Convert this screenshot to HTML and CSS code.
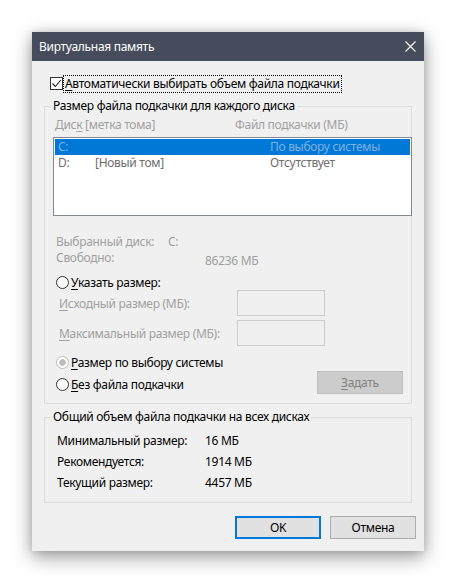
FILE: index.html
```html
<!DOCTYPE html>
<html lang="ru">
<head>
<meta charset="utf-8">
<title>Виртуальная память</title>
<link rel="stylesheet" href="styles.css">
</head>
<body>
<div class="dialog">
  <div class="titlebar">
    <span class="title">Виртуальная память</span>
    <svg class="close" width="11" height="11" viewBox="0 0 11 11"><path d="M0.5 0.5L10.5 10.5M10.5 0.5L0.5 10.5" stroke="#fff" stroke-width="1.1" fill="none"/></svg>
  </div>
  <div class="content">
    <div class="auto-row">
      <span class="checkbox"><svg width="11" height="11" viewBox="0 0 11 11"><path d="M1.5 5.5L4.3 8.5L9.8 2" stroke="#222" stroke-width="1.1" fill="none"/></svg></span>
      <span class="focus"><u>А</u>втоматически выбирать объем файла подкачки</span>
    </div>

    <div class="group g1">
      <span class="legend">Размер файла подкачки для каждого диска</span>
      <div class="hdr disabled">
        <span>Дис<u>к</u> [метка тома]</span>
        <span>Файл подкачки (МБ)</span>
      </div>
      <div class="list">
        <div class="lrow sel"><span>C:</span><span></span><span>По выбору системы</span></div>
        <div class="lrow"><span>D:</span><span>[Новый том]</span><span>Отсутствует</span></div>
      </div>
      <div class="info disabled">
        <div class="irow"><span class="ilabel">Выбранный диск:</span><span>C:</span></div>
        <div class="irow"><span class="ilabel">Свободно:</span><span class="free">86236 МБ</span></div>
      </div>
      <div class="radio-row r1"><span class="radio"></span><span><u>У</u>казать размер:</span></div>
      <div class="field-row f1"><span class="flabel disabled"><u>И</u>сходный размер (МБ):</span><span class="input"></span></div>
      <div class="field-row f2"><span class="flabel disabled"><u>М</u>аксимальный размер (МБ):</span><span class="input"></span></div>
      <div class="radio-row r2"><span class="radio checked"></span><span><u>Р</u>азмер по выбору системы</span></div>
      <div class="last-row">
        <div class="radio-row r3"><span class="radio"></span><span><u>Б</u>ез файла подкачки</span></div>
        <span class="btn btn-dis"><u>З</u>адать</span>
      </div>
    </div>

    <div class="group g2">
      <span class="legend">Общий объем файла подкачки на всех дисках</span>
      <div class="trow"><span>Минимальный размер:</span><span>16 МБ</span></div>
      <div class="trow"><span>Рекомендуется:</span><span>1914 МБ</span></div>
      <div class="trow"><span>Текущий размер:</span><span>4457 МБ</span></div>
    </div>

    <div class="buttons">
      <span class="btn btn-def">OK</span>
      <span class="btn">Отмена</span>
    </div>
  </div>
</div>
</body>
</html>
```

FILE: styles.css
```css
* { box-sizing: border-box; }
html, body { margin: 0; padding: 0; }
body {
  width: 456px;
  height: 583px;
  background: #ffffff;
  font-family: "Noto Sans", "Open Sans", sans-serif;
  font-size: 12px;
  letter-spacing: -0.3px;
  color: #000;
  overflow: hidden;
}
u { text-decoration: underline; text-underline-offset: 2px; }
.dialog {
  margin: 32px 0 0 32px;
  width: 392px;
  height: 519px;
  background: #f0f0f0;
  box-shadow: 0 6px 18px rgba(0,0,0,0.40), 0 0 8px rgba(0,0,0,0.12);
  display: flex;
  flex-direction: column;
}
.titlebar {
  height: 29px;
  background: #464c5c;
  display: flex;
  align-items: center;
  justify-content: space-between;
  padding: 0 7px 0 7px;
  color: #fff;
}
.title { line-height: 16px; padding-top: 1px; }
.close { margin-right: 1px; }
.content {
  padding: 0 12px;
  display: flex;
  flex-direction: column;
}
.auto-row {
  margin-top: 14px;
  height: 17px;
  display: flex;
  align-items: center;
  padding-left: 6px;
}
.checkbox {
  width: 13px;
  height: 13px;
  border: 1px solid #333;
  background: #fff;
  display: flex;
  align-items: center;
  justify-content: center;
  margin-right: 1px;
}
.focus {
  outline: 1px dotted #000;
  outline-offset: 0;
  padding: 0 1px;
  line-height: 16px;
}
.group {
  position: relative;
  border: 1px solid #dcdcdc;
  display: flex;
  flex-direction: column;
}
.legend {
  position: absolute;
  top: -9px;
  left: 6px;
  padding: 0 2px;
  background: #f0f0f0;
  line-height: 16px;
}
.disabled { color: #a0a0a0; }
.g1 { margin-top: 14px; height: 298px; padding-top: 10px; }
.hdr {
  height: 16px;
  line-height: 16px;
  padding-left: 10px;
  display: grid;
  grid-template-columns: 180px auto;
}
.list {
  margin: 4px 0 0 8px;
  width: 359px;
  height: 79px;
  border: 1px solid #828790;
  background: #fff;
  padding: 1px;
}
.lrow {
  height: 16px;
  line-height: 16px;
  display: grid;
  grid-template-columns: 37px 175px auto;
  padding-left: 3px;
  color: #6d6d6d;
}
.lrow.sel { background: #0078d7; color: #7fb0e0; }
.info { margin-top: 18px; padding-left: 11px; }
.irow { height: 16px; line-height: 16px; display: flex; }
.ilabel { width: 112px; }
.free { margin-left: 37px; position: relative; top: 3px; }
.radio-row { display: flex; align-items: center; padding-left: 11px; }
.radio {
  width: 13px;
  height: 13px;
  border-radius: 50%;
  border: 1px solid #333;
  background: #fff;
  margin-right: 2px;
  flex: none;
}
.radio.checked {
  border-color: #bcbcbc;
  background: #fff radial-gradient(circle, #bcbcbc 0 3px, transparent 3.5px);
}
.r1 { margin-top: 9px; height: 15px; }
.field-row { display: flex; align-items: center; height: 26px; padding-left: 14px; }
.flabel { width: 178px; }
.input { width: 88px; height: 26px; border: 1px solid #cccccc; background: #f0f0f0; }
.f2 { margin-top: 4px; }
.r2 { margin-top: 8px; height: 16px; }
.last-row { margin-top: 1px; height: 23px; display: flex; align-items: center; justify-content: space-between; padding-right: 8px; }
.r3 { padding-top: 3px; }
.btn {
  width: 86px;
  height: 23px;
  border: 1px solid #adadad;
  background: #e1e1e1;
  display: flex;
  align-items: center;
  justify-content: center;
  line-height: 16px;
}
.btn-dis { background: #cccccc; border-color: #bfbfbf; color: #838383; }
.btn-def { border: 2px solid #0078d7; }
.g2 { margin-top: 13px; height: 86px; padding: 12px 0 0 12px; }
.trow { height: 21px; display: flex; align-items: center; }
.trow span:first-child { width: 148px; }
.buttons {
  margin-top: 13px;
  margin-right: -4px;
  display: flex;
  justify-content: flex-end;
  gap: 9px;
}
```
